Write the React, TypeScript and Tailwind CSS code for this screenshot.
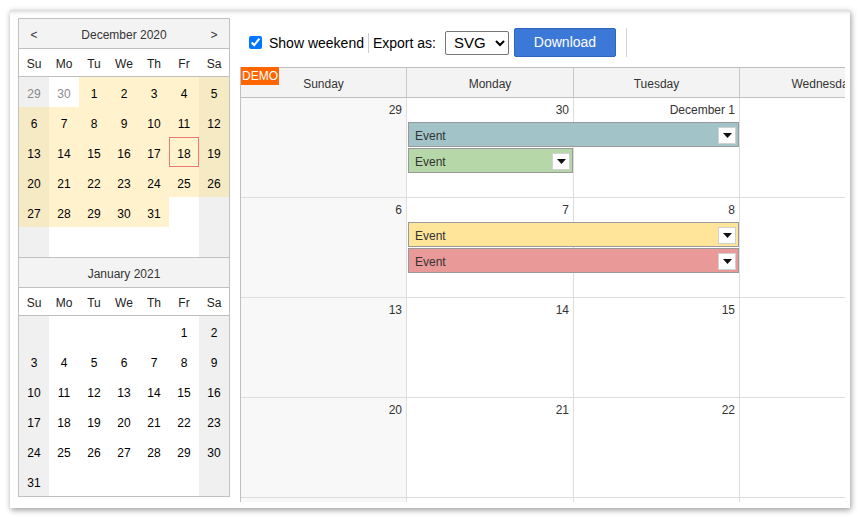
import React from 'react';

type NavCell = { day: number | null; other?: boolean; selected?: boolean; today?: boolean };

const dayNames = ['Su', 'Mo', 'Tu', 'We', 'Th', 'Fr', 'Sa'];
const weekDays = ['Sunday', 'Monday', 'Tuesday', 'Wednesday', 'Thursday', 'Friday', 'Saturday'];

// builds 6 weeks of cells for the navigator
const buildMonth = (offset: number, days: number, prevDays: number[], selected: boolean, today?: number) => {
  const cells: NavCell[] = [];
  for (let i = 0; i < 42; i++) {
    const d = i - offset + 1;
    if (d < 1) {
      const prev = prevDays[i];
      cells.push(prev ? { day: prev, other: true } : { day: null });
    } else if (d > days) {
      cells.push({ day: null });
    } else {
      cells.push({ day: d, selected, today: d === today });
    }
  }
  const rows: NavCell[][] = [];
  for (let r = 0; r < 6; r++) rows.push(cells.slice(r * 7, r * 7 + 7));
  return rows;
};

const december = buildMonth(2, 31, [29, 30], true, 18);
const january = buildMonth(5, 31, [], false);

const cellBg = (cell: NavCell, col: number) => {
  const weekend = col === 0 || col === 6;
  if (cell.selected) return weekend ? 'bg-[#f6eac5]' : 'bg-[#fff2cc]';
  return weekend ? 'bg-[#f0f0f0]' : 'bg-white';
};

const NavMonth = ({ title, rows, arrows, first }: { title: string; rows: NavCell[][]; arrows?: boolean; first?: boolean }) => (
  <div className={first ? '' : 'border-t border-[#c0c0c0]'}>
    <div className="h-[30px] pt-[2px] bg-[#f3f3f3] border-b border-[#c0c0c0] grid grid-cols-[30px_1fr_30px] items-center text-[12px] text-[#333]">
      <div className="text-center">{arrows ? '<' : ''}</div>
      <div className="text-center">{title}</div>
      <div className="text-center">{arrows ? '>' : ''}</div>
    </div>
    <div className="h-[28px] pt-[2px] border-b border-[#c0c0c0] grid grid-cols-7 items-center text-[12px] text-[#222]">
      {dayNames.map(n => (
        <div key={n} className="text-center">{n}</div>
      ))}
    </div>
    {rows.map((row, r) => (
      <div key={r} className="grid grid-cols-7">
        {row.map((cell, c) => (
          <div
            key={c}
            className={`h-[30px] pt-[4px] flex items-center justify-center text-[12px] ${cellBg(cell, c)} ${cell.other ? 'text-[#8a8a8a]' : 'text-black'} ${cell.today ? 'border border-[#ee7777]' : ''}`}
          >
            {cell.day}
          </div>
        ))}
      </div>
    ))}
  </div>
);

type CalEvent = { left: number; width: number; top: number; color: string };

const weeks: { days: string[]; events: CalEvent[] }[] = [
  {
    days: ['29', '30', 'December 1', '2', '3', '4', '5'],
    events: [
      { left: 167, width: 331, top: 24, color: 'bg-[#a2c4c9]' },
      { left: 167, width: 165, top: 50, color: 'bg-[#b6d7a8]' },
    ],
  },
  {
    days: ['6', '7', '8', '9', '10', '11', '12'],
    events: [
      { left: 167, width: 331, top: 24, color: 'bg-[#ffe599]' },
      { left: 167, width: 331, top: 50, color: 'bg-[#ea9999]' },
    ],
  },
  { days: ['13', '14', '15', '16', '17', '18', '19'], events: [] },
  { days: ['20', '21', '22', '23', '24', '25', '26'], events: [] },
  { days: ['27', '28', '29', '30', '31', 'January 1', '2'], events: [] },
];

const cols = 'grid grid-cols-[166px_167px_166px_167px_166px_167px_166px] w-[1165px]';

const EventBox = ({ ev }: { ev: CalEvent }) => (
  <div
    className={`absolute h-[25px] border border-[#999] ${ev.color} flex items-center justify-between pl-[6px] pr-[2px] text-[12px] text-[#333]`}
    style={{ left: ev.left, width: ev.width, top: ev.top }}
  >
    <span className="pt-[2px]">Event</span>
    <div className="w-[18px] h-[17px] mt-[1px] bg-white border border-[#d0d0d0] flex items-center justify-center">
      <svg width="9" height="5" viewBox="0 0 9 5">
        <polygon points="0,0 9,0 4.5,5" fill="#111" />
      </svg>
    </div>
  </div>
);

export default function App() {
  return (
    <div className="w-[860px] h-[518px] bg-white p-[10px] font-['Liberation_Sans',Arial,sans-serif]">
      <div className="w-[840px] h-[498px] bg-white overflow-hidden flex gap-[10px] pt-[8px] pb-[6px] pl-[8px] pr-[5px] shadow-[1px_2px_6px_rgba(0,0,0,0.4),inset_0_5px_5px_-4px_rgba(0,0,0,0.22)]">
        {/* date navigator */}
        <div className="w-[212px] shrink-0 self-start border border-[#c0c0c0]">
          <NavMonth title="December 2020" rows={december} arrows first />
          <NavMonth title="January 2021" rows={january} />
        </div>

        {/* toolbar + month view */}
        <div className="flex-1 min-w-0 flex flex-col">
          <div className="h-[49px] shrink-0 flex items-center pl-[9px] text-[14px] text-black">
            <input type="checkbox" defaultChecked className="w-[13px] h-[13px]" />
            <span className="ml-[7px] pt-[2px]">Show weekend</span>
            <div className="w-px h-[20px] bg-[#cccccc] ml-[4px] mr-[4px]" />
            <span className="pt-[2px]">Export as:</span>
            <select
              defaultValue="svg"
              className="ml-[9px] w-[64px] h-[24px] border border-[#767676] rounded-[2px] bg-white text-[15px] pl-[4px] text-black"
            >
              <option value="svg">SVG</option>
              <option value="png">PNG</option>
            </select>
            <button className="ml-[5px] w-[102px] h-[29px] bg-[#3c78d8] border border-[#2f64bd] rounded-[2px] text-white text-[14px]">
              Download
            </button>
            <div className="w-px h-[29px] bg-[#d4d4d4] ml-[10px]" />
          </div>

          <div className="relative flex-1 overflow-hidden border-l border-[#c0c0c0]">
            <div className={`${cols} h-[31px] pt-[2px] bg-[#f3f3f3] border-t border-b border-[#c0c0c0]`}>
              {weekDays.map(d => (
                <div key={d} className="border-r border-[#c8c8c8] -mt-[2px] pt-[2px] flex items-center justify-center text-[12px] text-[#333]">
                  {d}
                </div>
              ))}
            </div>
            {weeks.map((w, i) => (
              <div key={i} className="relative">
                <div className={`${cols} h-[100px] border-b border-[#dddddd]`}>
                  {w.days.map((d, c) => (
                    <div
                      key={c}
                      className={`border-r border-[#dddddd] text-right pr-[4px] pt-[5px] text-[12px] leading-[15px] text-[#333] ${c === 0 || c === 6 ? 'bg-[#f8f8f8]' : 'bg-white'}`}
                    >
                      {d}
                    </div>
                  ))}
                </div>
                {w.events.map((ev, k) => (
                  <EventBox key={k} ev={ev} />
                ))}
              </div>
            ))}
            <div className="absolute left-0 top-0 h-[18px] px-[1px] bg-[#ff6600] text-white text-[12px] leading-[19px]">
              DEMO
            </div>
          </div>
        </div>
      </div>
    </div>
  );
}
